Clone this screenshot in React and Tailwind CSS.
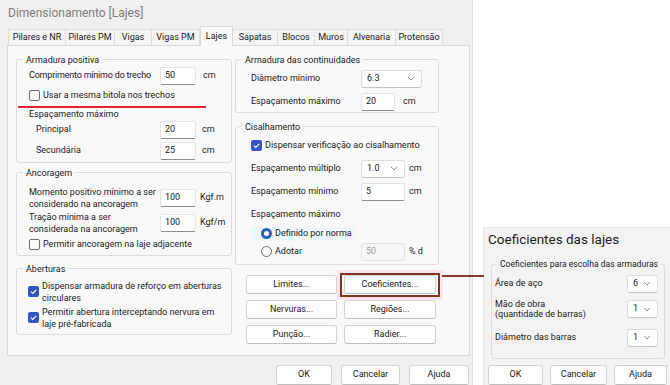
import React from "react";

function Chevron() {
  return (
    <svg width="8" height="5" viewBox="0 0 8 5" className="shrink-0">
      <path d="M1 1 L4 4 L7 1" fill="none" stroke="#8a8a8a" strokeWidth="1" />
    </svg>
  );
}

function Check({ checked }) {
  if (checked) {
    return (
      <span className="w-[11px] h-[11px] shrink-0 rounded-[2px] bg-[#3356c2] flex items-center justify-center">
        <svg width="9" height="9" viewBox="0 0 9 9">
          <path d="M2 4.6 L3.8 6.4 L7.2 2.8" fill="none" stroke="white" strokeWidth="1.2" />
        </svg>
      </span>
    );
  }
  return <span className="w-[11px] h-[11px] shrink-0 rounded-[2px] border border-[#707070] bg-[#fbfbfb]" />;
}

function Radio({ on }) {
  if (on) {
    return (
      <span className="w-[11px] h-[11px] shrink-0 rounded-full bg-[#2f5fb8] flex items-center justify-center">
        <span className="w-[5px] h-[5px] rounded-full bg-white" />
      </span>
    );
  }
  return <span className="w-[11px] h-[11px] shrink-0 rounded-full border border-[#707070] bg-[#fbfbfb]" />;
}

function Input({ value, w = "w-[36px]", disabled }) {
  return (
    <div
      className={`${w} h-[18px] shrink-0 rounded-[2px] border flex items-center pl-[4px] ${
        disabled
          ? "bg-[#f7f7f7] border-[#e2e2e2] text-[#a0a0a0]"
          : "bg-white border-[#e4e4e4] border-b-[#8e8e8e] text-[#1a1a1a]"
      }`}
    >
      {value}
    </div>
  );
}

function Select({ value, w }) {
  return (
    <div className={`${w} h-[18px] shrink-0 rounded-[3px] border border-[#dedede] border-b-[#c4c4c4] bg-white flex items-center justify-between pl-[5px] pr-[6px]`}>
      <span>{value}</span>
      <Chevron />
    </div>
  );
}

function Btn({ children, className = "" }) {
  return (
    <div className={`relative h-[19px] rounded-[3px] border border-[#d4d4d4] border-b-[#bdbdbd] bg-[#fdfdfd] flex items-center justify-center text-[#1a1a1a] ${className}`}>
      {children}
    </div>
  );
}

function Group({ title, className = "", legendClass = "ml-[6px]", children }) {
  return (
    <fieldset className={`border border-[#dcdcdc] rounded-[3px] min-w-0 ${className}`}>
      <legend className={`${legendClass} px-[3px] leading-[12px] whitespace-nowrap text-[#1a1a1a]`}>{title}</legend>
      {children}
    </fieldset>
  );
}

const tabs = [
  ["Pilares e NR", "w-[58px]"],
  ["Pilares PM", "w-[49px]"],
  ["Vigas", "w-[37px]"],
  ["Vigas PM", "w-[48px]"],
  ["Lajes", "w-[33px]"],
  ["Sapatas", "w-[45px]"],
  ["Blocos", "w-[37px]"],
  ["Muros", "w-[33px]"],
  ["Alvenaria", "w-[48px]"],
  ["Protensão", "w-[47px]"],
];

function App() {
  return (
    <div className="relative w-[670px] h-[385px] overflow-hidden bg-white flex font-['Roboto','Liberation_Sans',sans-serif] text-[9px] text-[#1a1a1a]">
      {/* main dialog */}
      <div className="w-[473px] h-full shrink-0 bg-[#f0f0f0] border-r border-[#e2e2e2] flex flex-col">
        <div className="h-[27px] pl-[8px] pt-[5px] text-[12px] leading-[16px] text-[#7d7d7d]">
          Dimensionamento [Lajes]
        </div>

        <div className="h-[18px] pl-[8px] flex items-end">
          {tabs.map(([t, w]) =>
            t === "Lajes" ? (
              <div
                key={t}
                className={`${w} h-[20px] -mb-px relative z-10 bg-[#f9f9f9] border border-b-0 border-[#d9d9d9] flex items-center justify-center`}
              >
                {t}
              </div>
            ) : (
              <div
                key={t}
                className={`${w} h-[16px] bg-[#f4f4f4] border-t border-r border-[#dedede] first:border-l flex items-center justify-center`}
              >
                {t}
              </div>
            )
          )}
        </div>

        <div className="ml-[7px] w-[463px] h-[313px] bg-[#f9f9f9] border border-[#d9d9d9] flex gap-[3px] pl-[8px]">
          {/* left column */}
          <div className="w-[216px] flex flex-col pt-[8px]">
            <Group title="Armadura positiva" className="h-[109px] relative">
              <div className="pl-[12px]">
                <div className="mt-[1px] h-[18px] flex items-center">
                  <span className="w-[131px] tracking-[-0.2px]">Comprimento mínimo do trecho</span>
                  <Input value="50" />
                  <span className="ml-[7px]">cm</span>
                </div>
                <div className="mt-[5px] h-[12px] flex items-center gap-[3px]">
                  <Check />
                  <span>Usar a mesma bitola nos trechos</span>
                </div>
                <div className="mt-[7px] h-[12px] flex items-center">Espaçamento máximo</div>
                <div className="h-[18px] flex items-center">
                  <span className="w-[131px] pl-[7px]">Principal</span>
                  <Input value="20" />
                  <span className="ml-[6px]">cm</span>
                </div>
                <div className="mt-[3px] h-[18px] flex items-center">
                  <span className="w-[131px] pl-[7px]">Secundária</span>
                  <Input value="25" />
                  <span className="ml-[6px]">cm</span>
                </div>
              </div>
              <div className="absolute left-[1px] top-[40px] w-[188px] h-[2px] bg-[#e3242b]" />
            </Group>

            <Group title="Ancoragem" className="h-[89px] mt-[4px]">
              <div className="pl-[12px]">
                <div className="mt-[7px] h-[24px] flex items-center">
                  <span className="w-[131px] leading-[12px]">
                    Momento positivo mínimo a ser
                    <br />
                    considerado na ancoragem
                  </span>
                  <Input value="100" />
                  <span className="ml-[4px]">Kgf.m</span>
                </div>
                <div className="mt-[1px] h-[24px] flex items-center">
                  <span className="w-[131px] leading-[12px]">
                    Tração mínima a ser
                    <br />
                    considerada na ancoragem
                  </span>
                  <Input value="100" />
                  <span className="ml-[4px]">Kgf/m</span>
                </div>
                <div className="mt-[4px] h-[12px] flex items-center gap-[3px]">
                  <Check />
                  <span>Permitir ancoragem na laje adjacente</span>
                </div>
              </div>
            </Group>

            <Group title="Aberturas" className="h-[72px] mt-[7px]">
              <div className="pl-[11px]">
                <div className="mt-[5px] h-[24px] flex items-center gap-[3px]">
                  <Check checked />
                  <span className="leading-[12px]">
                    Dispensar armadura de reforço em aberturas
                    <br />
                    circulares
                  </span>
                </div>
                <div className="mt-[2px] h-[24px] flex items-center gap-[3px]">
                  <Check checked />
                  <span className="leading-[12px]">
                    Permitir abertura interceptando nervura em
                    <br />
                    laje pré-fabricada
                  </span>
                </div>
              </div>
            </Group>
          </div>

          {/* right column */}
          <div className="w-[204px] flex flex-col pt-[8px]">
            <Group title="Armadura das continuidades" className="h-[59px]">
              <div className="pl-[15px]">
                <div className="mt-[4px] h-[18px] flex items-center">
                  <span className="w-[110px]">Diâmetro mínimo</span>
                  <Select value="6.3" w="w-[61px]" />
                </div>
                <div className="mt-[5px] h-[18px] flex items-center">
                  <span className="w-[110px]">Espaçamento máximo</span>
                  <Input value="20" w="w-[34px]" />
                  <span className="ml-[8px]">cm</span>
                </div>
              </div>
            </Group>

            <Group title="Cisalhamento" className="h-[144px] mt-[8px]">
              <div className="pl-[15px]">
                <div className="mt-[7px] h-[12px] flex items-center gap-[3px]">
                  <Check checked />
                  <span>Dispensar verificação ao cisalhamento</span>
                </div>
                <div className="mt-[8px] h-[18px] flex items-center">
                  <span className="w-[110px]">Espaçamento múltiplo</span>
                  <Select value="1.0" w="w-[44px]" />
                  <span className="ml-[4px]">cm</span>
                </div>
                <div className="mt-[5px] h-[18px] flex items-center">
                  <span className="w-[110px]">Espaçamento mínimo</span>
                  <Input value="5" w="w-[44px]" />
                  <span className="ml-[4px]">cm</span>
                </div>
                <div className="mt-[8px] h-[12px] flex items-center">Espaçamento máximo</div>
                <div className="mt-[6px] h-[14px] w-[104px] flex items-center gap-[3px] pl-[10px] whitespace-nowrap bg-[#eef7fa]">
                  <Radio on />
                  <span>Definido por norma</span>
                </div>
                <div className="mt-[2px] h-[18px] flex items-center">
                  <span className="w-[110px] flex items-center gap-[3px] pl-[10px]">
                    <Radio />
                    <span>Adotar</span>
                  </span>
                  <Input value="50" w="w-[44px]" disabled />
                  <span className="ml-[4px]">% d</span>
                </div>
              </div>
            </Group>

            <div className="mt-[10px] ml-[11px] grid grid-cols-[91px_92px] gap-x-[7px] gap-y-[6px]">
              <Btn>Limites...</Btn>
              <Btn>
                Coeficientes...
                <span className="absolute -left-[5px] -right-[5px] -top-[3px] -bottom-[4px] border-2 border-[#7b3a1f] shadow-[0_0_0_3px_#fbe3ee]" />
              </Btn>
              <Btn>Nervuras...</Btn>
              <Btn>Regiões...</Btn>
              <Btn>Punção...</Btn>
              <Btn>Radier...</Btn>
            </div>
          </div>
        </div>

        <div className="mt-[9px] flex justify-end gap-[9px] pr-[3px]">
          <Btn className="w-[56px] h-[20px]">OK</Btn>
          <Btn className="w-[59px] h-[20px]">Cancelar</Btn>
          <Btn className="w-[60px] h-[20px]">Ajuda</Btn>
        </div>
      </div>

      {/* connector */}
      <div className="absolute left-[442px] top-[275px] w-[42px] h-[2px] bg-[#8a3a26]" />

      {/* secondary dialog */}
      <div className="flex-1 flex flex-col justify-end pl-[10px]">
        <div className="h-[158px] bg-[#f3f3f3] border-l border-t border-[#e4e4e4] flex flex-col">
          <div className="h-[22px] pl-[4px] pt-[2px] text-[13.5px] leading-[18px] text-[#1c1c1c]">
            Coeficientes das lajes
          </div>
          <Group
            title="Coeficientes para escolha das armaduras"
            className="ml-[7px] w-[174px] h-[101px] mt-[8px] text-[8.6px]"
            legendClass="ml-[5px]"
          >
            <div className="pl-[3px] pr-[6px] text-[9px]">
              <div className="mt-[5px] h-[17px] flex items-center justify-between">
                <span>Área de aço</span>
                <Select value="6" w="w-[31px]" />
              </div>
              <div className="mt-[5px] h-[24px] flex items-center justify-between">
                <span className="leading-[10px]">
                  Mão de obra
                  <br />
                  (quantidade de barras)
                </span>
                <Select value="1" w="w-[31px]" />
              </div>
              <div className="mt-[8px] h-[17px] flex items-center justify-between">
                <span>Diâmetro das barras</span>
                <Select value="1" w="w-[31px]" />
              </div>
            </div>
          </Group>
          <div className="mt-[6px] flex gap-[7px] pl-[4px]">
            <Btn className="w-[55px] h-[20px] border-[#4f6e9e] border-b-[#4f6e9e]">OK</Btn>
            <Btn className="w-[57px] h-[20px]">Cancelar</Btn>
            <Btn className="w-[53px] h-[20px]">Ajuda</Btn>
          </div>
        </div>
      </div>
    </div>
  );
}

export default App;
